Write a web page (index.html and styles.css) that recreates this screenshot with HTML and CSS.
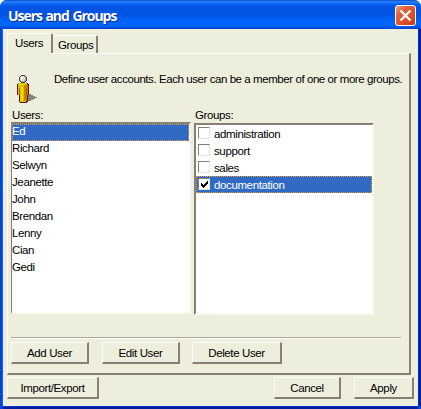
FILE: index.html
```html
<!DOCTYPE html>
<html lang="en">
<head>
<meta charset="utf-8">
<title>Users and Groups</title>
<link rel="stylesheet" href="styles.css">
</head>
<body>
<main class="window">
  <header class="titlebar">
    <h1>Users and Groups</h1>
    <button class="close" aria-label="Close"><svg width="21" height="21" viewBox="0 0 21 21"><path d="M5.5 5.5L15.5 15.5M15.5 5.5L5.5 15.5" stroke="#fff" stroke-width="2.3"/></svg></button>
  </header>
  <div class="client">
    <nav class="tabs">
      <div class="tab active">Users</div>
      <div class="tab groups-tab">Groups</div>
    </nav>
    <section class="panel">
      <div class="intro">
        <svg class="person" width="24" height="32" viewBox="0 0 24 32" shape-rendering="crispEdges">
          <path d="M12 20h3v1h2v1h2v1h2v1h-2v1h-2v1h-2v1h-3v1h-3v-5h3z" fill="#84847b"/>
          <path d="M2 9h10v1h1v11h-1v7h-1v1H4v-1H3v-7H1V10h1z" fill="#6b1000"/>
          <path d="M2 9h9v12h-1v7H4v-7H2z" fill="#d6c600"/>
          <path d="M3 10h5v1H3zM5 13h2v14H5z" fill="#f7d700"/>
          <path d="M8 11h4v10h-1v6H8z" fill="#c68400"/>
          <path d="M3 14h1v7H3zM10 14h1v7h-1z" fill="#a56300"/>
          <path d="M5 1h4v1h1v1h1v4h-1v1H9v1H5V8H4V7H3V3h1V2h1z" fill="#4a423a"/>
          <path d="M5 2h4v1h1v4H9v1H5V7H4V3h1z" fill="#a5a5a5"/>
          <path d="M5 2h3v1h1v3H8v1H5V6H4V3h1z" fill="#dedede"/>
          <path d="M5 3h2v2H5z" fill="#fff"/>
        </svg>
        <p>Define user accounts. Each user can be a member of one or more groups.</p>
      </div>
      <div class="lists">
        <div class="column">
          <label>Users:</label>
          <ul class="list users">
            <li class="selected">Ed</li><li>Richard</li><li>Selwyn</li><li>Jeanette</li><li>John</li><li>Brendan</li><li>Lenny</li><li>Cian</li><li>Gedi</li>
          </ul>
        </div>
        <div class="column">
          <label>Groups:</label>
          <ul class="list groups">
            <li><i class="check"></i>administration</li>
            <li><i class="check"></i>support</li>
            <li><i class="check"></i>sales</li>
            <li class="selected"><i class="check"><svg width="9" height="9" viewBox="0 0 9 9" shape-rendering="crispEdges"><path d="M1 3h1v1h1v1h1V4h1V3h1V2h1V1h1v3H7v1H6v1H5v1H4v1H3V7H2V6H1z" fill="#000"/></svg></i>documentation</li>
          </ul>
        </div>
      </div>
      <hr>
      <div class="actions">
        <button class="btn add">Add User</button>
        <button class="btn edit">Edit User</button>
        <button class="btn delete">Delete User</button>
      </div>
    </section>
    <footer>
      <button class="btn import">Import/Export</button>
      <button class="btn cancel">Cancel</button>
      <button class="btn apply">Apply</button>
    </footer>
  </div>
</main>
</body>
</html>
```
FILE: styles.css
```css
* { box-sizing: border-box; margin: 0; padding: 0; }
body { background: #fff; font: 11.5px/17px "Liberation Sans", sans-serif; letter-spacing: -0.38px; color: #000; overflow: hidden; }
.window {
  width: 421px; height: 409px; border-radius: 7px 7px 0 0; overflow: hidden;
  display: flex; flex-direction: column; background: #0046dc;
}
.titlebar {
  height: 29px; flex: none; display: flex; align-items: flex-start; justify-content: space-between;
  padding: 5px 5px 0 8px;
  background: linear-gradient(#0848c8 0, #2b86ff 2px, #0a62f2 4px, #0054e3 7px, #0055e5 15px, #0066ff 22px, #0062f8 26px, #0040c8 29px);
}
h1 { font: bold 14px/22px "Open Sans", sans-serif; letter-spacing: -1.05px; word-spacing: 1px; color: #fff; text-shadow: 1px 1px #0a2a85; white-space: nowrap; }
.close {
  width: 21px; height: 21px; border: 1px solid #fff; border-radius: 3px;
  background: linear-gradient(135deg, #f0a088 0, #e2603a 30%, #d84a22 75%, #b83410 100%);
  display: flex; align-items: center; justify-content: center;
}
.close svg { flex: none; }
.client {
  flex: 1; margin: 0 3px 3px; padding: 4px 4px 0; background: #eeeedd;
  box-shadow: 1px 0 #0030c0, -1px 0 #1560f0, 3px 0 #001ea0, 0 1px #0838c8, 0 3px #001ea0;
}
.tabs { display: flex; align-items: flex-end; height: 20px; }
.tab { white-space: nowrap; border: solid; border-width: 1px 2px 0 1px; border-color: #fff #857f76 #fff #fff; border-radius: 2px 2px 0 0; }
.active { width: 46px; height: 20px; padding: 1px 0 0 7px; }
.groups-tab { width: 45px; height: 18px; padding: 1px 0 0 5px; border-left: 0; }
.panel {
  width: 404px; height: 322px; padding: 17px 0 0 3px; margin-bottom: 2px; position: relative;
  border: solid; border-width: 1px 2px 2px 1px; border-color: #fff #857f76 #857f76 #fff;
}
.panel::before { content: ""; position: absolute; left: 0; top: -1px; width: 43px; height: 1px; background: #eeeedd; }
.intro { display: flex; height: 35px; }
.person { margin: 3px 0 0 5px; flex: none; }
.intro p { margin-left: 14px; white-space: nowrap; letter-spacing: -0.43px; }
.lists { display: flex; gap: 3px; height: 209px; }
label { display: block; height: 16px; line-height: 18px; padding-left: 1px; }
.column:last-child label { height: 17px; }
.list { list-style: none; height: 192px; background: #fff; border: solid; border-width: 2px; border-color: #857f76 #f8f8f0 #f8f8f0 #857f76; }
.users { width: 180px; border-left-width: 1px; }
.groups { width: 180px; }
li { height: 17px; line-height: 18px; white-space: nowrap; }
.users li { line-height: 15px; }
.groups li { display: flex; padding-left: 1px; }
.selected { background: #316ac5; color: #fff; outline: 1px dotted #e8a038; outline-offset: -1px; }
.check { width: 12px; height: 12px; margin: 2px 4px 0 1px; background: #fff; border: 1px solid; border-color: #857f76 #e6e6d8 #e6e6d8 #857f76; display: grid; place-items: center; flex: none; }
hr { height: 2px; width: 390px; border: 0; border-top: 1px solid #aca899; border-bottom: 1px solid #fff; margin-top: 22px; }
.actions { display: flex; margin-top: 3px; }
.btn {
  height: 22px; font: inherit; letter-spacing: inherit; line-height: 18px; text-align: center; white-space: nowrap; background: #eeeedd; flex: none;
  border: solid; border-width: 1px 2px 2px 1px; border-color: #fff #857f76 #857f76 #fff;
}
.add { width: 78px; }
.edit { width: 78px; margin-left: 13px; }
.delete { width: 90px; margin-left: 12px; }
footer { display: flex; }
.import { width: 92px; }
.cancel { width: 67px; margin-left: 175px; }
.apply { width: 60px; margin-left: 13px; }
```
